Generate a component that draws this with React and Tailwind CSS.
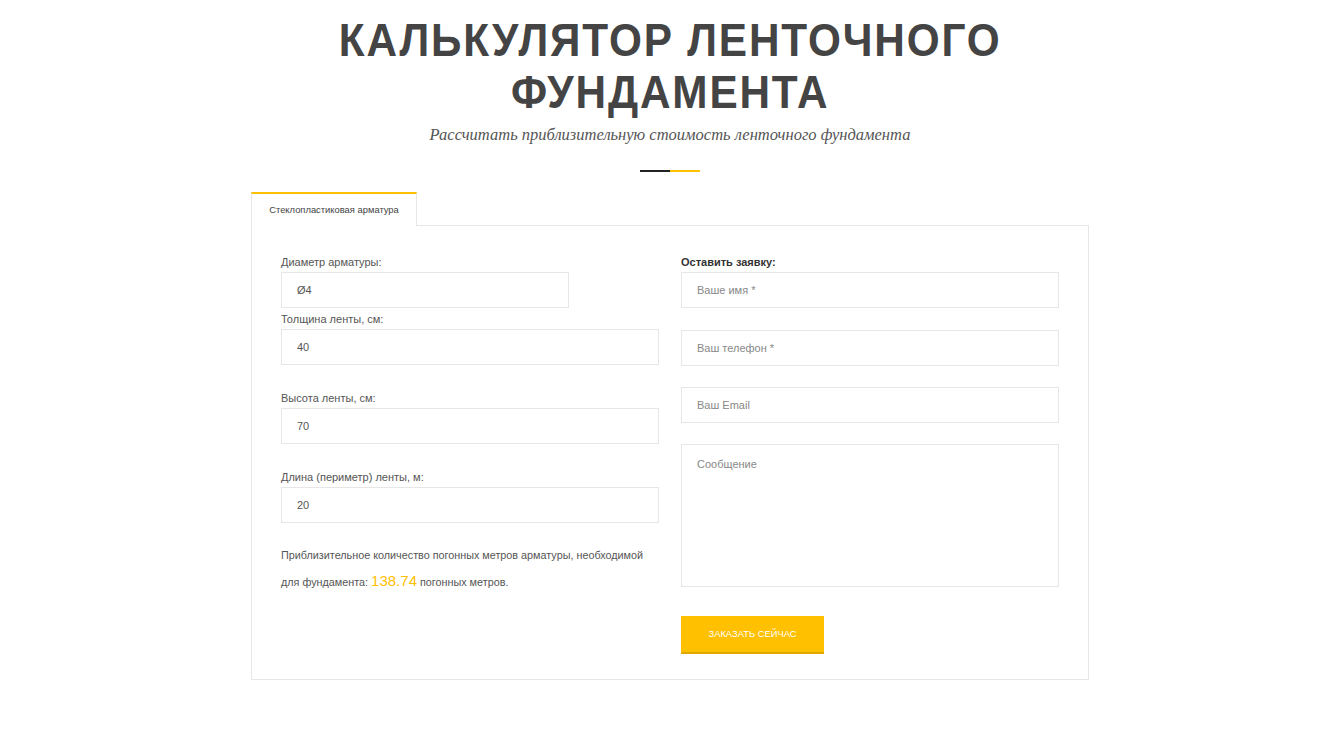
import React from 'react'

const inputCls =
  'h-[36px] w-full border border-[#e6e6e6] bg-white px-[15px] text-[11px] text-[#555] outline-none placeholder:text-[#888]'

const Field = ({ label, value, className = '' }) => (
  <div className={className}>
    <div className="text-[11px] leading-[14px] text-[#555]">{label}</div>
    <input className={`${inputCls} mt-[3px]`} defaultValue={value} readOnly />
  </div>
)

export default function App() {
  return (
    <div
      className="min-h-[729px] w-full bg-white"
      style={{ fontFamily: '"Liberation Sans", Arial, sans-serif' }}
    >
      {/* Header */}
      <div className="flex flex-col items-center pt-[14px]">
        <h1 className="scale-x-[0.92] text-center text-[46px] font-bold uppercase leading-[52px] tracking-[2px] text-[#444]">
          Калькулятор ленточного
          <br />
          фундамента
        </h1>
        <p
          className="mt-[5px] text-[16.5px] italic leading-[24px] text-[#555]"
          style={{ fontFamily: '"Liberation Serif", "DejaVu Serif", serif' }}
        >
          Рассчитать приблизительную стоимость ленточного фундамента
        </p>
        <div className="mt-[23px] flex">
          <div className="h-[2px] w-[30px] bg-[#222]" />
          <div className="h-[2px] w-[30px] bg-[#ffc000]" />
        </div>
      </div>

      {/* Calculator */}
      <div className="mx-auto mt-[20px] w-[838px]">
        <div className="flex">
          <div className="relative -mb-px flex h-[34px] w-[166px] items-center justify-center border-x border-t-2 border-[#e6e6e6] border-t-[#ffc000] bg-white text-[9.4px] text-[#444]">
            Стеклопластиковая арматура
          </div>
        </div>
        <div className="grid h-[455px] grid-cols-2 gap-[22px] border border-[#e6e6e6] px-[29px] pt-[29px]">
          {/* Left */}
          <div className="flex flex-col">
            <Field label="Диаметр арматуры:" value="Ø4" className="w-[288px]" />
            <Field label="Толщина ленты, см:" value="40" className="mt-[4px]" />
            <Field label="Высота ленты, см:" value="70" className="mt-[26px]" />
            <Field label="Длина (периметр) ленты, м:" value="20" className="mt-[26px]" />
            <p className="mt-[19px] text-[10.8px] leading-[26px] text-[#555]">
              Приблизительное количество погонных метров арматуры, необходимой
              <br />
              для фундамента: <span className="text-[15px] text-[#ffc000]">138.74</span> погонных метров.
            </p>
          </div>

          {/* Right */}
          <div className="flex flex-col">
            <div className="text-[11px] font-bold leading-[14px] text-[#333]">Оставить заявку:</div>
            <input className={`${inputCls} mt-[3px]`} placeholder="Ваше имя *" />
            <input className={`${inputCls} mt-[22px]`} placeholder="Ваш телефон *" />
            <input className={`${inputCls} mt-[21px]`} placeholder="Ваш Email" />
            <textarea
              className="mt-[21px] h-[143px] w-full resize-none border border-[#e6e6e6] px-[15px] py-[11px] text-[11px] text-[#555] outline-none placeholder:text-[#888]"
              placeholder="Сообщение"
            />
            <button className="mt-[29px] h-[38px] w-[143px] border-b-2 border-[#e0a800] bg-[#ffc000] text-[9.4px] uppercase text-white">
              Заказать сейчас
            </button>
          </div>
        </div>
      </div>
    </div>
  )
}
